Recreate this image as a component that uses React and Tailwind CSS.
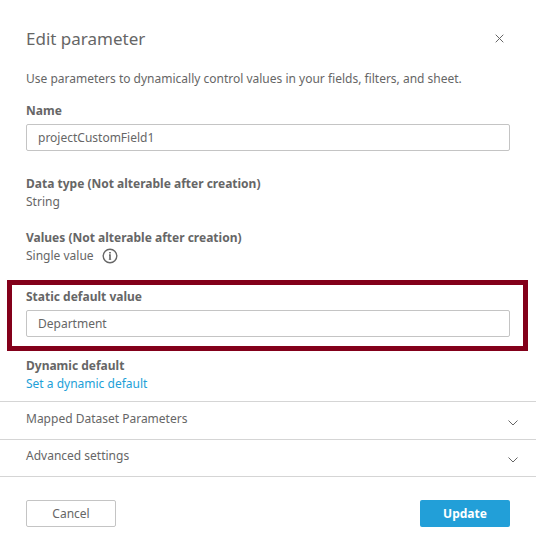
import React, { useState } from "react";

const ChevronIcon = () => (
  <svg width="10" height="6" viewBox="0 0 10 6" fill="none" stroke="currentColor" aria-hidden="true">
    <path d="M0.5 0.5 L5 5 L9.5 0.5" />
  </svg>
);

const InfoIcon = () => (
  <svg width="16" height="16" viewBox="0 0 16 16" fill="none" stroke="currentColor" aria-hidden="true">
    <circle cx="8" cy="8" r="6.8" strokeWidth="1.4" />
    <path d="M8 4v1.6" strokeWidth="1.7" />
    <path d="M7 7H8v4.4" strokeWidth="1.6" />
    <path d="M6.8 11.4h2.4" strokeWidth="0.8" />
  </svg>
);

const TextField = ({ id, label, value, onChange }) => (
  <div className="flex flex-col gap-1">
    <label htmlFor={id} className="self-start font-bold">
      {label}
    </label>
    <input
      id={id}
      type="text"
      value={value}
      onChange={onChange}
      className="h-[27px] w-full rounded-xs border border-[#c4c4c4] bg-white px-[11px] outline-none"
    />
  </div>
);

const CollapsedSection = ({ title }) => (
  <button
    type="button"
    aria-expanded="false"
    className="flex w-full items-center justify-between border-t border-[#d5d5d5] pr-[18px] pl-[26px] text-left"
  >
    <span className="pb-1">{title}</span>
    <span className="pt-1">
      <ChevronIcon />
    </span>
  </button>
);

const App = () => {
  const [name, setName] = useState("projectCustomField1");
  const [defaultValue, setDefaultValue] = useState("Department");

  return (
    <div className="bg-white pr-1 font-['Noto_Sans',sans-serif] text-[12px] leading-[18px] text-[#666]">
      <form onSubmit={(e) => e.preventDefault()}>
        <header className="flex items-center justify-between px-[26px] pt-6">
          <h1 className="text-[17px] leading-[30px]">Edit parameter</h1>
          <button type="button" aria-label="Close" className="p-1.5 pb-2">
            <svg width="9" height="9" viewBox="0 0 9 9" fill="none" stroke="currentColor">
              <path d="M0.7 0.7l7.6 7.6M8.3 0.7L0.7 8.3" />
            </svg>
          </button>
        </header>

        <div className="px-[26px] pt-4">
          <p>Use parameters to dynamically control values in your fields, filters, and sheet.</p>
          <div className="pt-3.5">
            <TextField id="name" label="Name" value={name} onChange={(e) => setName(e.target.value)} />
          </div>
          <div className="pt-6">
            <h2 className="font-bold">Data type (Not alterable after creation)</h2>
            <p>String</p>
          </div>
          <div className="pt-[18px]">
            <h2 className="font-bold">Values (Not alterable after creation)</h2>
            <p className="flex items-center gap-2">
              Single value
              <InfoIcon />
            </p>
          </div>
        </div>

        <div className="mt-[15px] mr-2 ml-[7px] border-5 border-[#83001a] pt-[3px] pr-[13px] pb-[9px] pl-[14px]">
          <TextField
            id="static-default"
            label="Static default value"
            value={defaultValue}
            onChange={(e) => setDefaultValue(e.target.value)}
          />
        </div>

        <div className="px-[26px] pt-1.5 pb-2">
          <h2 className="font-bold">Dynamic default</h2>
          <a href="#" className="block text-[#229fd8]">
            Set a dynamic default
          </a>
        </div>

        <div className="grid grid-rows-[38px_37px] border-b border-[#d5d5d5]">
          <CollapsedSection title="Mapped Dataset Parameters" />
          <CollapsedSection title="Advanced settings" />
        </div>

        <footer className="flex justify-between px-[26px] pt-[23px]">
          <button type="button" className="h-[27px] w-[90px] rounded-xs border border-[#c4c4c4]">
            Cancel
          </button>
          <button type="submit" className="h-[27px] w-[90px] rounded-xs bg-[#229fd8] font-bold text-white">
            Update
          </button>
        </footer>
      </form>
    </div>
  );
};

export default App;
